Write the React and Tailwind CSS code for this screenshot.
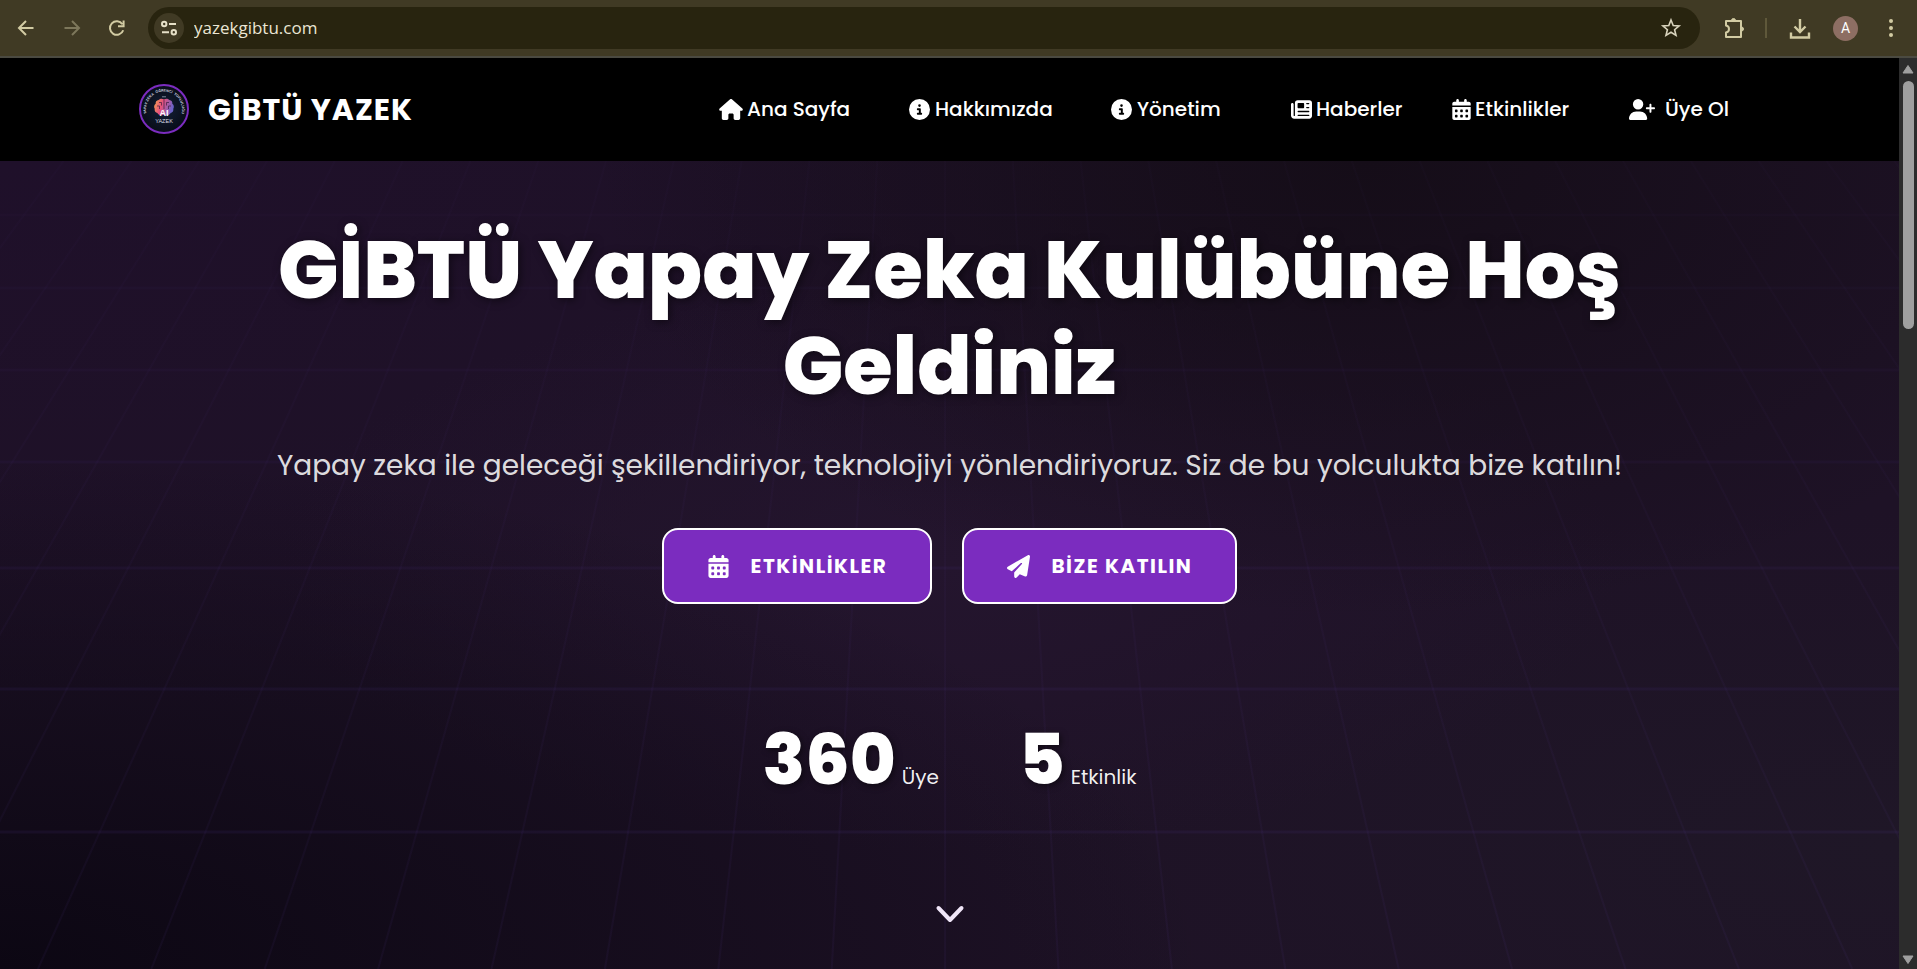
import {
  FaCalendarDays,
  FaCircleInfo,
  FaHouse,
  FaNewspaper,
  FaPaperPlane,
  FaUserPlus,
} from 'react-icons/fa6';

const navItems = [
  { label: 'Ana Sayfa', icon: FaHouse, className: 'w-[190px] gap-1', iconClass: 'w-6' },
  { label: 'Hakkımızda', icon: FaCircleInfo, className: 'w-[202px] gap-[5px]', iconClass: 'w-[21px]' },
  { label: 'Yönetim', icon: FaCircleInfo, className: 'w-[180px] gap-[5px]', iconClass: 'w-[21px]' },
  { label: 'Haberler', icon: FaNewspaper, className: 'w-[161px] gap-1', iconClass: 'w-[21px]' },
  { label: 'Etkinlikler', icon: FaCalendarDays, className: 'w-[177px] gap-1', iconClass: 'w-[19px]' },
  { label: 'Üye Ol', icon: FaUserPlus, className: 'w-[131px] gap-[10px]', iconClass: 'w-[26px]' },
];

const stats = [
  { value: '360', label: 'Üye' },
  { value: '5', label: 'Etkinlik' },
];

// Grid floor: rows get further apart towards the viewer
const gridRows = [54, 127, 209, 301, 407, 528, 671];
const gridColumns = Array.from({ length: 29 }, (_, i) => i - 14);

function BrowserBar() {
  return (
    <div className="flex h-[58px] shrink-0 items-center border-b-2 border-[#4b4a41] bg-[#403a24] text-[#d2cba3]">
      <div className="flex items-center gap-[22px] pl-[14px]">
        <button type="button" aria-label="Geri" className="p-px">
          <svg className="size-[22px]" viewBox="0 0 22 22" fill="none" stroke="currentColor" strokeWidth="2">
            <path d="M18.5 11H4M11 4l-7 7 7 7" />
          </svg>
        </button>
        <button type="button" aria-label="İleri" className="p-px text-[#7d775b]">
          <svg className="size-[22px]" viewBox="0 0 22 22" fill="none" stroke="currentColor" strokeWidth="2">
            <path d="M3.5 11H18M11 4l7 7-7 7" />
          </svg>
        </button>
        <button type="button" aria-label="Yenile" className="p-px">
          <svg className="size-[22px]" viewBox="0 0 22 22" fill="none" stroke="currentColor" strokeWidth="2">
            <path d="M16.200 13.200A6.800 6.800 0 1 1 15.400 7.200M16.600 3.600v5.600H11" />
          </svg>
        </button>
      </div>

      <div className="ml-[18px] flex h-[42px] flex-1 items-center rounded-full bg-[#28240f] pl-[6px] pr-[18px]">
        <button
          type="button"
          aria-label="Site bilgileri"
          className="flex size-[30px] items-center justify-center rounded-full bg-[#403a24] text-[#e6e0c8]"
        >
          <svg className="size-[18px]" viewBox="0 0 18 18" fill="none" stroke="currentColor" strokeWidth="2">
            <circle cx="4.2" cy="5" r="2.2" />
            <path d="M9 5h7M2 13.2h7" />
            <circle cx="13.8" cy="13.2" r="2.2" />
          </svg>
        </button>
        <input
          type="text"
          aria-label="Adres"
          defaultValue="yazekgibtu.com"
          className="ml-[10px] min-w-0 flex-1 bg-transparent font-['Open_Sans',sans-serif] text-[17px] text-[#ebe6d4] outline-none"
        />
        <button type="button" aria-label="Yer işareti ekle" className="text-[#d9d4bd]">
          <svg className="size-[22px]" viewBox="0 0 22 22" fill="none" stroke="currentColor" strokeWidth="1.6">
            <path d="M11 3l2.2 5.5 5.9.4-4.5 3.8 1.4 5.7-5-3.1-5 3.1 1.4-5.7-4.5-3.8 5.9-.4z" />
          </svg>
        </button>
      </div>

      <div className="flex items-center pl-[22px] pr-[14px]">
        <button type="button" aria-label="Uzantılar">
          <svg className="size-6" viewBox="0 0 24 24" fill="none" stroke="currentColor" strokeWidth="2" strokeLinejoin="round">
            <path d="M4 5h15v16H4v-4.500c2-.4 3-1.700 3-3.500s-1-3.100-3-3.500z" />
            <path d="M9.500 4.500a2 2 0 0 1 4 0zM19.500 11a2 2 0 0 1 0 4z" fill="currentColor" strokeWidth="1" />
          </svg>
        </button>
        <span className="ml-[19px] h-5 w-[2px] bg-[#5f583a]" />
        <button type="button" aria-label="İndirilenler" className="ml-[21px]">
          <svg className="size-6" viewBox="0 0 24 24" fill="none" stroke="currentColor" strokeWidth="2.400">
            <path d="M12 3v12.500M6.500 10.500l5.500 5.500 5.500-5.500M3 16.500v5h18v-5" />
          </svg>
        </button>
        <button
          type="button"
          aria-label="Profil"
          className="ml-[21px] flex size-[25px] items-center justify-center rounded-full bg-[#8d6e63] font-['Roboto',sans-serif] text-[14px] text-white"
        >
          A
        </button>
        <button type="button" aria-label="Menü" className="ml-[21px]">
          <svg className="size-6" viewBox="0 0 24 24" fill="currentColor">
            <circle cx="12" cy="5" r="2" />
            <circle cx="12" cy="12" r="2" />
            <circle cx="12" cy="19" r="2" />
          </svg>
        </button>
      </div>
    </div>
  );
}

function Logo() {
  return (
    <svg className="size-[50px]" viewBox="0 0 50 50" fontFamily="Liberation Sans, sans-serif" aria-hidden="true">
      <defs>
        <radialGradient id="logoBg">
          <stop offset="0" stopColor="#142038" />
          <stop offset="1" stopColor="#080d18" />
        </radialGradient>
        <linearGradient id="brain" x1="0" y1="0" x2="1" y2="0.300">
          <stop offset="0" stopColor="#f2a94b" />
          <stop offset="0.450" stopColor="#e8517c" />
          <stop offset="1" stopColor="#6c63c9" />
        </linearGradient>
        <path id="logoArc" d="M8 31.500A18 18 0 1 1 42 31.500" />
      </defs>
      <circle cx="25" cy="25" r="24" fill="url(#logoBg)" stroke="#7b2cbf" strokeWidth="2" />
      <g fill="#d8dbe4" fontSize="3.500" fontWeight="700">
        <text>
          <textPath href="#logoArc" startOffset="3%">YAPAY ZEKA</textPath>
        </text>
        <text>
          <textPath href="#logoArc" startOffset="50%" textAnchor="middle">ÖĞRENCİ</textPath>
        </text>
        <text>
          <textPath href="#logoArc" startOffset="97%" textAnchor="end">TOPLULUĞU</textPath>
        </text>
      </g>
      <path
        d="M25 15.500c-2-1.500-4.500-.8-5.300.6-2.400.2-3.300 2-3 3.600-1.700 1.200-2 3.400-1 5-.5 2.300 1 4 2.700 4.200.8 2 3.200 2.700 6.600 2.200 3.400.5 5.800-.2 6.600-2.200 1.700-.2 3.200-1.900 2.700-4.200 1-1.600.7-3.800-1-5 .3-1.600-.6-3.400-3-3.600-.8-1.400-3.300-2.100-5.300-.6z"
        fill="url(#brain)"
      />
      <path
        d="M25 16v9M20 18.500h2.500v3M18 22h2.500v3M30 18.500h-2.500v3M32 22h-2.500v3"
        fill="none"
        stroke="#3a1d3f"
        strokeWidth="0.700"
      />
      <path d="M23 12.800h4" stroke="#9aa3b8" strokeWidth="0.800" />
      <text x="25" y="31.500" textAnchor="middle" fill="#fff" fontSize="9" fontWeight="700">
        AI
      </text>
      <text x="25" y="38.500" textAnchor="middle" fill="#d8dbe4" fontSize="5.500">
        YAZEK
      </text>
    </svg>
  );
}

function Header() {
  return (
    <header className="border-b border-black bg-black px-8">
      <div className="mx-auto flex h-[102px] max-w-[1621px] items-center justify-between">
        <a href="#" className="flex items-center gap-[19px]">
          <Logo />
          <span className="text-[30px] font-bold tracking-[1px] whitespace-nowrap">GİBTÜ YAZEK</span>
        </a>
        <nav className="flex items-center">
          {navItems.map(({ label, icon: Icon, className, iconClass }) => (
            <a
              key={label}
              href="#"
              className={`flex items-center text-[20px] font-medium whitespace-nowrap ${className}`}
            >
              <Icon className={`h-[21px] shrink-0 ${iconClass}`} />
              {label}
            </a>
          ))}
        </nav>
      </div>
    </header>
  );
}

function GridBackground() {
  return (
    <svg
      className="absolute inset-0 size-full"
      viewBox="0 0 1899 808"
      preserveAspectRatio="none"
      fill="none"
      aria-hidden="true"
    >
      <defs>
        <linearGradient id="gridFade" gradientUnits="userSpaceOnUse" x1="0" y1="0" x2="0" y2="808">
          <stop offset="0" stopColor="#5a3aa0" stopOpacity="0.025" />
          <stop offset="1" stopColor="#5a3aa0" stopOpacity="0.080" />
        </linearGradient>
      </defs>
      {gridRows.map((y, i) => (
        <path key={y} d={`M0 ${y}H1899`} stroke="#5a3aa0" strokeWidth="3" strokeOpacity={0.03 + i * 0.014} />
      ))}
      {gridColumns.map((k) => (
        <path key={k} d={`M${945 + k * 67.8} 0L${945.1 + k * 113.4} 808`} stroke="url(#gridFade)" strokeWidth="2" />
      ))}
    </svg>
  );
}

function Hero() {
  return (
    <main className="relative flex-1 overflow-hidden bg-[#1e1226] bg-[radial-gradient(ellipse_at_0%_100%,#0c0713_0%,transparent_45%),radial-gradient(ellipse_at_72%_0%,#150d18_0%,transparent_40%),radial-gradient(ellipse_at_50%_50%,#24152e_0%,transparent_50%),radial-gradient(ellipse_at_100%_85%,#1f1727_0%,transparent_35%),radial-gradient(ellipse_at_0%_0%,#1f102a_0%,transparent_50%)]">
      <GridBackground />
      <div className="relative flex h-full flex-col items-center text-center">
        <h1 className="mt-[61px] max-w-[1400px] text-[80px] leading-[96px] font-extrabold [text-shadow:2px_2px_8px_rgba(0,0,0,0.5)]">
          GİBTÜ Yapay Zeka Kulübüne Hoş Geldiniz
        </h1>
        <p className="mt-[28px] text-[28px] leading-[48px] text-white/87">
          Yapay zeka ile geleceği şekillendiriyor, teknolojiyi yönlendiriyoruz. Siz de bu yolculukta bize katılın!
        </p>

        <div className="mt-[38px] flex gap-[30px]">
          <button
            type="button"
            className="flex h-[76px] items-center gap-[21px] rounded-2xl border-2 border-white bg-[#7b2cbf] px-[43px] text-[20px] font-bold tracking-[1.5px]"
          >
            <FaCalendarDays className="h-[23px] w-auto" />
            ETKİNLİKLER
          </button>
          <button
            type="button"
            className="flex h-[76px] items-center gap-[21px] rounded-2xl border-2 border-white bg-[#7b2cbf] px-[43px] text-[20px] font-bold tracking-[1.5px]"
          >
            <FaPaperPlane className="h-[23px] w-auto" />
            BİZE KATILIN
          </button>
        </div>

        <div className="mt-[112px] flex gap-[80px]">
          {stats.map((stat) => (
            <div key={stat.label} className="flex items-baseline gap-[6px]">
              <span className="text-[70px] leading-[88px] font-extrabold [text-shadow:2px_2px_6px_rgba(0,0,0,0.5)]">
                {stat.value}
              </span>
              <span className="text-[20px] text-white/95">{stat.label}</span>
            </div>
          ))}
        </div>

        <a href="#" aria-label="Aşağı kaydır" className="mt-[100px]">
          <svg className="h-5 w-8" viewBox="0 0 32 20" fill="none" stroke="#f0e6f8" strokeWidth="4" strokeLinecap="round" strokeLinejoin="round">
            <path d="M4.500 4l11.500 12L27.500 4" />
          </svg>
        </a>
      </div>
    </main>
  );
}

function Scrollbar() {
  return (
    <div className="flex w-[18px] shrink-0 flex-col items-center bg-[#2c2c2c] pt-[6px] pb-1">
      <svg className="h-[10px] w-3" viewBox="0 0 12 10" fill="#9f9f9f" stroke="#9f9f9f" strokeLinejoin="round">
        <path d="M6 1.500L11 9H1z" />
      </svg>
      <div className="mt-[7px] h-[248px] w-[11px] rounded-full bg-[#9f9f9f]" />
      <svg className="mt-auto h-[10px] w-3" viewBox="0 0 12 10" fill="#9f9f9f" stroke="#9f9f9f" strokeLinejoin="round">
        <path d="M6 8.500L11 1H1z" />
      </svg>
    </div>
  );
}

export default function App() {
  return (
    <div className="flex min-h-screen flex-col bg-black font-['Poppins','Inter',sans-serif] text-white">
      <BrowserBar />
      <div className="flex flex-1">
        <div className="flex min-w-0 flex-1 flex-col">
          <Header />
          <Hero />
        </div>
        <Scrollbar />
      </div>
    </div>
  );
}
